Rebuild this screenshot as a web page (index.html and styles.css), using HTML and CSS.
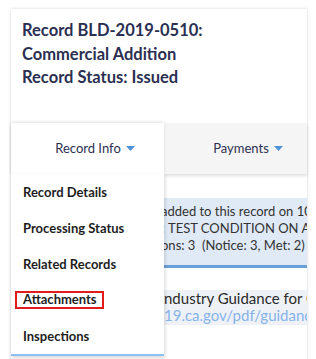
FILE: index.html
```html
<!DOCTYPE html>
<html lang="en">
<head>
<meta charset="utf-8">
<title>Record BLD-2019-0510</title>
<link rel="stylesheet" href="styles.css">
</head>
<body>
<div class="card">
  <header class="record-head">
    <div>Record BLD-2019-0510:</div>
    <div>Commercial Addition</div>
    <div>Record Status: Issued</div>
  </header>
  <nav class="tabs">
    <div class="tab tab-active">
      <span>Record Info</span>
      <svg class="caret" width="9" height="5" viewBox="0 0 9 5"><polygon points="0,0 9,0 4.5,5" /></svg>
      <ul class="menu">
        <li class="menu-item">Record Details</li>
        <li class="menu-item">Processing Status</li>
        <li class="menu-item">Related Records</li>
        <li class="menu-item"><span class="highlight">Attachments</span></li>
        <li class="menu-item">Inspections</li>
      </ul>
    </div>
    <div class="tab">
      <span>Payments</span>
      <svg class="caret" width="9" height="5" viewBox="0 0 9 5"><polygon points="0,0 9,0 4.5,5" /></svg>
    </div>
  </nav>
  <section class="content">
    <div class="notice">
      <div class="line"><span class="pre pre-a">1 condition has been </span><span>added to this record on 10/14/2019.</span></div>
      <div class="line"><span class="pre pre-b">Condition: </span><span>TEST CONDITION ON ADDITION</span></div>
      <div class="line"><span class="pre pre-c">View Conditi</span><span>ons: 3  (Notice: 3, Met: 2)</span></div>
    </div>
    <div class="guidance">
      <div class="line guide-title"><span class="pre pre-d">I</span><span>ndustry Guidance for Construction</span></div>
      <div class="line guide-link"><span class="pre pre-d">https://covid</span><span>19.ca.gov/pdf/guidance-construction.pdf</span></div>
    </div>
  </section>
</div>
</body>
</html>
```
FILE: styles.css
```css
html, body {
  margin: 0;
  padding: 0;
  background: #ffffff;
}
body {
  font-family: Lato, "Open Sans", sans-serif;
  overflow: hidden;
}
.card {
  margin: 9px 9px 0 11px;
  width: 296px;
  height: 400px;
  background: #fff;
  box-shadow: 0 0 3px rgba(0, 0, 0, 0.18);
}
.record-head {
  padding: 10px 11px 33px 11px;
  font-size: 16.5px;
  font-weight: 700;
  line-height: 23.5px;
  color: #2b2f52;
}
.tabs {
  position: relative;
  z-index: 1;
  display: flex;
  height: 51px;
  background: #f5f5f5;
  box-shadow: 0 2px 3px rgba(0, 0, 0, 0.13);
}
.tab {
  position: relative;
  flex: 0 0 153px;
  display: flex;
  align-items: center;
  justify-content: center;
  gap: 5px;
  padding-left: 15px;
  box-sizing: border-box;
  font-size: 13px;
  color: #2d3050;
}
.tab-active {
  background: #fff;
  z-index: 2;
  box-shadow: 0 -1px 3px rgba(0, 0, 0, 0.12);
}
.caret {
  display: block;
  fill: #4b92db;
  margin-top: 1px;
}
.menu {
  position: absolute;
  top: 100%;
  left: 0;
  width: 153px;
  margin: 0;
  padding: 0;
  list-style: none;
  background: #fff;
  border-bottom: 2px solid #8dc0ee;
  box-shadow: 1px 2px 4px rgba(0, 0, 0, 0.16);
}
.menu-item {
  height: 36px;
  display: flex;
  align-items: center;
  padding-left: 12px;
  font-size: 13px;
  font-weight: 700;
  color: #1e1e1e;
}
.highlight {
  display: inline-block;
  margin-left: -8px;
  padding: 0 5px 1px 6px;
  line-height: 13px;
  border: 2px solid #e21b1b;
}
.content {
  padding-top: 24px;
}
.notice {
  background: #dfeaf6;
  padding: 5px 0 11px 0;
  border-bottom: 3px solid #6a9fd8;
  overflow: hidden;
  font-size: 13px;
  line-height: 17px;
  color: #333;
}
.line {
  display: flex;
  white-space: pre;
  overflow: hidden;
}
.pre {
  flex: 0 0 auto;
  overflow: hidden;
  text-align: right;
}
.pre-a { width: 150px; }
.pre-b { width: 157px; }
.pre-c { width: 150px; }
.pre-d { width: 153px; }
.guidance {
  margin-top: 22px;
  background: #eef2f7;
  padding: 0 0 1px 0;
  font-size: 15px;
  line-height: 17px;
}
.guide-title {
  color: #2a2a2a;
}
.guide-link {
  color: #86b3ea;
}
```
